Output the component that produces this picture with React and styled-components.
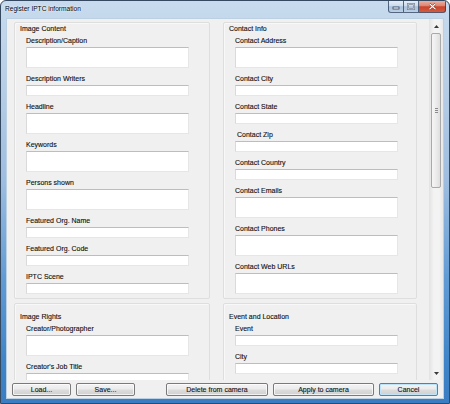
import React from 'react';
import styled, { createGlobalStyle } from 'styled-components';

const GlobalStyle = createGlobalStyle`
  html, body { margin: 0; padding: 0; background: #ffffff; }
  body { font-family: "Liberation Sans", Arial, sans-serif; }
  * { box-sizing: border-box; }
`;

const Window = styled.div`
  width: 450px;
  height: 404px;
  display: flex;
  flex-direction: column;
  border: 1px solid #34495f;
  border-radius: 6px 6px 0 0;
  padding: 0 5px 4px 5px;
  overflow: hidden;
  background: linear-gradient(to bottom, #c8dbee 0%, #b6cde6 22%, #9dbde0 45%, #5f9ad4 70%, #3f84c8 90%, #3a7dc2 100%);
`;

const TitleBar = styled.div`
  height: 17px;
  margin: 0 -5px;
  padding: 0 3px 0 4px;
  display: flex;
  align-items: flex-start;
  flex-shrink: 0;
`;

const TitleText = styled.span`
  font-size: 6.6px;
  line-height: 16px;
  color: #000;
  text-shadow: 0 0 3px rgba(255, 255, 255, 0.95), 0 0 1px #fff;
  white-space: nowrap;
`;

const Controls = styled.div`
  display: flex;
  margin-left: auto;
`;

const CtrlButton = styled.div`
  width: ${p => p.$w}px;
  height: 12px;
  display: flex;
  align-items: center;
  justify-content: center;
  border: 1px solid rgba(38, 58, 88, 0.75);
  border-top: none;
  border-radius: ${p => p.$radius};
  background: ${p =>
    p.$close
      ? 'linear-gradient(to bottom, #eab0a3 0%, #dc8470 45%, #c8452c 52%, #d35b40 100%)'
      : 'linear-gradient(to bottom, #e4edf6 0%, #cbdaeb 45%, #a9c1dc 52%, #bcd0e6 100%)'};
  & + & { border-left: none; }
`;

const Client = styled.div`
  flex: 1;
  min-height: 0;
  display: flex;
  flex-direction: column;
  background: #f0f0f0;
  border: 1px solid #bcd0e4;
`;

const ScrollArea = styled.div`
  flex: 1;
  min-height: 0;
  display: flex;
`;

const Viewport = styled.div`
  flex: 1;
  overflow: hidden;
  padding: 3px 0 0 7px;
`;

const Columns = styled.div`
  display: grid;
  grid-template-columns: 196px 194px;
  column-gap: 13px;
  row-gap: 4px;
  align-items: start;
`;

const Group = styled.div`
  border: 1px solid #dedede;
  border-radius: 2px;
  box-shadow: inset 1px 1px 0 #f8f8f8;
  padding: ${p => p.$top}px 0 ${p => p.$bottom}px 0;
`;

const GroupTitle = styled.div`
  padding-left: 5px;
  font-size: 7px;
  line-height: 9px;
  color: #111;
  -webkit-text-stroke: 0.12px #111;
  margin-bottom: 3px;
  white-space: nowrap;
`;

const Fields = styled.div`
  display: flex;
  flex-direction: column;
  gap: 6px;
  padding-left: 11px;
`;

const Field = styled.div`
  display: flex;
  flex-direction: column;
`;

const Label = styled.div`
  font-size: 7px;
  line-height: 10px;
  height: 10px;
  margin-bottom: 1px;
  padding-left: ${p => (p.$indent ? 2 : 0)}px;
  color: #111;
  -webkit-text-stroke: 0.12px #111;
  white-space: nowrap;
`;

const Input = styled.div`
  width: 163px;
  height: ${p => (p.$big ? 21 : 11)}px;
  background: #ffffff;
  border: 1px solid #e6e6e6;
  border-top-color: #bdbdbd;
  border-left-color: #dadada;
`;

const Scrollbar = styled.div`
  width: 14px;
  display: flex;
  flex-direction: column;
  border-left: 1px solid #e4e4e4;
  background: linear-gradient(to right, #e6e6e6 0%, #f3f3f3 30%, #f3f3f3 70%, #e8e8e8 100%);
`;

const ArrowButton = styled.div`
  height: 14px;
  display: flex;
  align-items: center;
  justify-content: center;
  flex-shrink: 0;
`;

const Track = styled.div`
  flex: 1;
  padding: 0 2px 0 1px;
`;

const Thumb = styled.div`
  height: 155px;
  border: 1px solid #a9a9a9;
  border-radius: 2px;
  background: linear-gradient(to right, #f6f6f6 0%, #ececec 50%, #dedede 100%);
  display: flex;
  flex-direction: column;
  align-items: center;
  justify-content: center;
  gap: 1px;
`;

const Grip = styled.div`
  width: 3px;
  height: 1px;
  background: #8a8a8a;
`;

const ButtonBar = styled.div`
  height: 18px;
  flex-shrink: 0;
  display: flex;
  gap: 5px;
  padding: 3px 5px 0 5px;
`;

const Spacer = styled.div`
  flex: 1;
`;

const Button = styled.button`
  width: ${p => p.$w}px;
  height: 13px;
  padding: 0;
  margin: 0;
  font-family: "Liberation Sans", Arial, sans-serif;
  font-size: 7px;
  line-height: 11px;
  color: #111;
  -webkit-text-stroke: 0.1px #111;
  border: 1px solid ${p => (p.$default ? '#3f86c2' : '#7a7a7a')};
  border-radius: 2px;
  background: linear-gradient(to bottom, #f3f3f3 0%, #ebebeb 48%, #dddddd 52%, #d0d0d0 100%);
  box-shadow: inset 0 0 0 1px ${p => (p.$default ? '#bfe3f9' : 'rgba(255,255,255,0.7)')};
  cursor: default;
`;

const leftGroup1 = [
  ['Description/Caption', true],
  ['Description Writers', false],
  ['Headline', true],
  ['Keywords', true],
  ['Persons shown', true],
  ['Featured Org. Name', false],
  ['Featured Org. Code', false],
  ['IPTC Scene', false],
];

const rightGroup1 = [
  ['Contact Address', true],
  ['Contact City', false],
  ['Contact State', false],
  ['Contact Zip', false, true],
  ['Contact Country', false],
  ['Contact Emails', true],
  ['Contact Phones', true],
  ['Contact Web URLs', true],
];

const leftGroup2 = [
  ["Creator/Photographer", true],
  ["Creator's Job Title", false],
];

const rightGroup2 = [
  ['Event', false],
  ['City', false],
];

function FieldList({ items }) {
  return (
    <Fields>
      {items.map(([label, big, indent]) => (
        <Field key={label}>
          <Label $indent={indent}>{label}</Label>
          <Input $big={big} />
        </Field>
      ))}
    </Fields>
  );
}

function MinGlyph() {
  return (
    <svg width="8" height="6" viewBox="0 0 8 6">
      <rect x="1" y="3" width="6" height="2" fill="#fff" stroke="#2f435c" strokeWidth="0.8" />
    </svg>
  );
}

function MaxGlyph() {
  return (
    <svg width="8" height="7" viewBox="0 0 8 7">
      <rect x="1" y="1" width="6" height="5" fill="none" stroke="#2f435c" strokeWidth="1.6" />
      <rect x="1" y="1" width="6" height="5" fill="none" stroke="#fff" strokeWidth="0.8" />
    </svg>
  );
}

function CloseGlyph() {
  return (
    <svg width="9" height="7" viewBox="0 0 9 7">
      <path d="M1.5 0.8 L7.5 6.2 M7.5 0.8 L1.5 6.2" stroke="#5a1c12" strokeWidth="2.2" />
      <path d="M1.5 0.8 L7.5 6.2 M7.5 0.8 L1.5 6.2" stroke="#fff" strokeWidth="1.2" />
    </svg>
  );
}

function ArrowGlyph({ down }) {
  return (
    <svg width="5" height="3" viewBox="0 0 5 3">
      <path d={down ? 'M0 0 L5 0 L2.5 3 Z' : 'M0 3 L5 3 L2.5 0 Z'} fill="#3a3a3a" />
    </svg>
  );
}

export default function App() {
  return (
    <>
      <GlobalStyle />
      <Window>
        <TitleBar>
          <TitleText>Register IPTC information</TitleText>
          <Controls>
            <CtrlButton $w={16} $radius="0 0 0 3px"><MinGlyph /></CtrlButton>
            <CtrlButton $w={15} $radius="0"><MaxGlyph /></CtrlButton>
            <CtrlButton $w={27} $radius="0 0 3px 0" $close><CloseGlyph /></CtrlButton>
          </Controls>
        </TitleBar>
        <Client>
          <ScrollArea>
            <Viewport>
              <Columns>
                <Group $top={1} $bottom={4}>
                  <GroupTitle>Image Content</GroupTitle>
                  <FieldList items={leftGroup1} />
                </Group>
                <Group $top={1} $bottom={4}>
                  <GroupTitle>Contact Info</GroupTitle>
                  <FieldList items={rightGroup1} />
                </Group>
                <Group $top={8} $bottom={40}>
                  <GroupTitle>Image Rights</GroupTitle>
                  <FieldList items={leftGroup2} />
                </Group>
                <Group $top={8} $bottom={40}>
                  <GroupTitle>Event and Location</GroupTitle>
                  <FieldList items={rightGroup2} />
                </Group>
              </Columns>
            </Viewport>
            <Scrollbar>
              <ArrowButton><ArrowGlyph /></ArrowButton>
              <Track>
                <Thumb>
                  <Grip />
                  <Grip />
                  <Grip />
                </Thumb>
              </Track>
              <ArrowButton><ArrowGlyph down /></ArrowButton>
            </Scrollbar>
          </ScrollArea>
          <ButtonBar>
            <Button $w={59}>Load...</Button>
            <Button $w={59}>Save...</Button>
            <Spacer />
            <Button $w={102}>Delete from camera</Button>
            <Button $w={101}>Apply to camera</Button>
            <Button $w={59} $default>Cancel</Button>
          </ButtonBar>
        </Client>
      </Window>
    </>
  );
}
